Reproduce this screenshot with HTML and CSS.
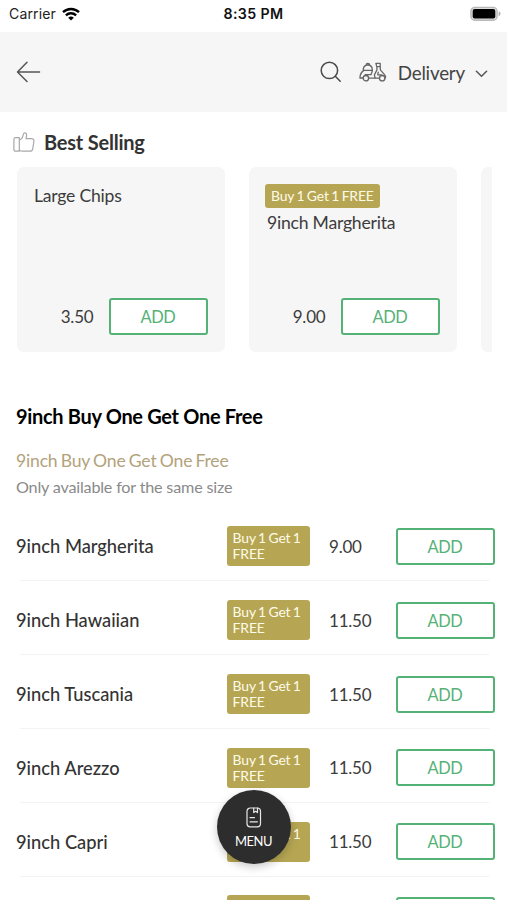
FILE: index.html
```html
<!DOCTYPE html>
<html lang="en">
<head>
<meta charset="utf-8">
<meta name="viewport" content="width=device-width, initial-scale=1">
<title>Menu</title>
<link rel="stylesheet" href="styles.css">
</head>
<body>
<div class="screen">
  <div class="status">
    <div class="carrier"><span>Carrier</span>
      <svg width="18" height="14" viewBox="0 0 18 14" fill="none" stroke="#000" stroke-width="2.4"><path d="M1 5.2a11.6 11.6 0 0 1 16 0M3.900 8.300a7.400 7.400 0 0 1 10.200 0"/><path d="M9 13.600 6.200 10.800a4 4 0 0 1 5.600 0z" fill="#000" stroke="none"/></svg>
    </div>
    <div class="clock">8:35 PM</div>
    <svg class="battery" width="31" height="16" viewBox="0 0 31 16"><rect x=".9" y="1.400" width="26.200" height="12.800" rx="4" fill="#ddd" stroke="#b8b8b8" stroke-width="1.400"/><rect x="2.700" y="3.100" width="22.600" height="9.400" rx="2" fill="#000"/><path d="M28.600 5.300q2 .8 2 2.500t-2 2.500z" fill="#b0b0b0"/></svg>
  </div>
  <header class="bar">
    <svg class="back" width="26" height="22" viewBox="0 0 26 22" fill="none" stroke="#555" stroke-width="1.500" stroke-linecap="round" stroke-linejoin="round"><path d="M23.500 11H1.500M11 1.200 1.500 11l9.500 9.500"/></svg>
    <svg class="search" width="22" height="22" viewBox="0 0 22 22" fill="none" stroke="#4a4a4a" stroke-width="1.500" stroke-linecap="round"><circle cx="9.400" cy="9.400" r="8.200"/><path d="m15.300 15.300 4.900 4.900"/></svg>
    <svg class="scooter" width="28" height="20" viewBox="0 0 28 20" fill="none" stroke="#666" stroke-width="1.300" stroke-linecap="round" stroke-linejoin="round"><path d="M4.200 8.400c0-3.600 1.500-5.400 4.600-5.400s4.600 1.800 4.600 5.400zM7 3.200C7.200.9 10.500.9 10.800 3.200M4.600 8.600C2 10.400.9 12.600.9 16h3M13.400 8.600 12 12.700H6.200M9.800 16.200h10"/><circle cx="6.900" cy="16.200" r="2.700"/><circle cx="23.200" cy="16.200" r="2.700"/><path d="M16.900 1.300h4.300v3.400h-3.400zM17.800 4.700l.2 3-2.600 5.200.7 3.300M21.200 4.700l.2 3.200 4.300 5c1 1.100 1.200 2.100.3 3.200M19.200 10.200l-.4 2.600 4 .1"/></svg>
    <span class="mode">Delivery</span>
    <svg class="chev" width="13" height="8" viewBox="0 0 13 8" fill="none" stroke="#555" stroke-width="1.500" stroke-linecap="round" stroke-linejoin="round"><path d="m1.400 1.200 5.100 5 5.100-5"/></svg>
  </header>
  <section class="best">
    <h2><svg width="22" height="21" viewBox="0 0 22 21" fill="none" stroke="#a8a8a8" stroke-width="1.200" stroke-linejoin="round" stroke-linecap="round"><path d="M6.300 19.200H2.700Q.9 19.200.9 17.400V7.500q0-1.800 1.800-1.800h3.600zM6.300 8.200c2.300-1.200 3.700-3.100 3.900-5.400.1-1.400.7-2 1.500-2 1.500 0 2.200 1.500 1.900 3.200l-.6 2.700h5.500c1.800 0 2.700 1.100 2.400 2.800l-1.200 7.300c-.3 1.800-1.100 2.400-2.700 2.400H9.800c-1.500 0-2.300-.3-3.500-1"/></svg><span>Best Selling</span></h2>
    <div class="cards">
      <article class="card">
        <div class="name">Large Chips</div>
        <div class="buy"><span class="price">3.50</span><button class="add">ADD</button></div>
      </article>
      <article class="card">
        <div class="tag">Buy 1 Get 1 FREE</div>
        <div class="name indent">9inch Margherita</div>
        <div class="buy"><span class="price">9.00</span><button class="add">ADD</button></div>
      </article>
      <article class="card"></article>
    </div>
  </section>
  <section class="list">
    <h1>9inch Buy One Get One Free</h1>
    <h3>9inch Buy One Get One Free</h3>
    <p class="note">Only available for the same size</p>
    <div class="row"><span class="item">9inch Margherita</span><span class="tag">Buy 1 Get 1 FREE</span><span class="price">9.00</span><button class="add">ADD</button></div>
    <div class="row"><span class="item">9inch Hawaiian</span><span class="tag">Buy 1 Get 1 FREE</span><span class="price">11.50</span><button class="add">ADD</button></div>
    <div class="row"><span class="item">9inch Tuscania</span><span class="tag">Buy 1 Get 1 FREE</span><span class="price">11.50</span><button class="add">ADD</button></div>
    <div class="row"><span class="item">9inch Arezzo</span><span class="tag">Buy 1 Get 1 FREE</span><span class="price">11.50</span><button class="add">ADD</button></div>
    <div class="row"><span class="item">9inch Capri</span><span class="tag">Buy 1 Get 1 FREE</span><span class="price">11.50</span><button class="add">ADD</button></div>
    <div class="row"><span class="item"></span><span class="tag"></span><span class="price"></span><button class="add"></button></div>
  </section>
  <button class="fab">
    <svg width="16" height="21" viewBox="0 0 16 21" fill="none" stroke="#e8e8e8" stroke-width="1.200" stroke-linecap="round" stroke-linejoin="round"><rect x="1" y="1" width="13.500" height="18.800" rx="3.300"/><path d="M7.700 1v4.600l1.900-1.300 1.900 1.300V1M4 10.700h4.500M4 14.800h7.400"/></svg>
    <span>MENU</span>
  </button>
</div>
</body>
</html>
```
FILE: styles.css
```css
* { box-sizing: border-box; }
body { margin: 0; background: #fff; }
.screen {
  position: relative;
  width: 507px;
  height: 900px;
  overflow: hidden;
  font-family: Lato, "Liberation Sans", sans-serif;
  color: #3c3c3c;
}
h1, h2, h3, p { margin: 0; }
button { font-family: inherit; padding: 0; margin: 0; }
svg { display: block; flex: none; }

.status {
  display: grid;
  grid-template-columns: 1fr auto 1fr;
  align-items: center;
  height: 32px;
  padding: 0 6px 5px;
  font-family: Inter, "Liberation Sans", sans-serif;
  font-size: 14px;
  color: #222;
}
.carrier { display: flex; align-items: center; gap: 6px; margin-left: 3px; letter-spacing: .15px; }
.clock { font-size: 14.2px; font-weight: 600; letter-spacing: .4px; color: #111; }
.battery { justify-self: end; }

.bar {
  display: flex;
  align-items: center;
  height: 80px;
  padding: 0 19px 0 16px;
  background: #f6f6f6;
}
.search { margin-left: auto; }
.scooter { margin-left: 17px; }
.mode { margin: 1px 10px 0 11px; font-size: 18.8px; letter-spacing: -.2px; line-height: 24px; color: #444; }
.chev { margin-top: 3px; }

.best { padding: 17px 15px 0 17px; }
.best h2 {
  display: flex;
  align-items: center;
  gap: 9px;
  height: 26px;
  margin-left: -4px;
  font-size: 20px;
  letter-spacing: -.22px;
  color: #333;
}
.cards { display: flex; gap: 24px; height: 185px; margin-top: 12px; overflow: hidden; }
.card {
  flex: 0 0 208px;
  display: flex;
  flex-direction: column;
  align-items: flex-start;
  padding: 17px 17px 17px;
  border-radius: 7px;
  background: #f6f6f6;
}
.name { font-size: 17.6px; letter-spacing: -.23px; line-height: 24px; }
.indent { margin: 3px 0 0 1px; }
.buy { display: flex; align-items: center; gap: 15.5px; margin-top: auto; align-self: flex-end; }
.price { font-size: 17px; letter-spacing: -.2px; }
.add {
  width: 99px;
  height: 37px;
  padding-right: 1px;
  border: 2px solid #55b277;
  border-radius: 3px;
  background: #fff;
  color: #55b277;
  font-size: 16.4px;
  letter-spacing: -.4px;
}
.tag {
  padding: 0 6px;
  border-radius: 3px;
  background: #b6a653;
  color: #fffbe9;
  font-size: 13.9px;
  letter-spacing: -.12px;
  word-spacing: -1px;
  line-height: 24px;
  white-space: nowrap;
}
.card .tag { margin-left: -1px; }

.list { padding: 50px 12px 0 16px; }
.list h1 { font-size: 20px; letter-spacing: -.32px; line-height: 28px; color: #000; }
.list h3 { margin-top: 19px; font-size: 17.6px; letter-spacing: -.2px; word-spacing: -1px; font-weight: 400; line-height: 24px; color: #b3a27c; }
.note { margin-top: 3px; font-size: 16.2px; letter-spacing: -.2px; line-height: 22px; color: #8a8a8a; }
.row {
  display: grid;
  grid-template-columns: 210.6px 83.4px 86px 99px;
  align-items: center;
  height: 73.8px;
  padding-top: 4px;
  background: linear-gradient(#f3f3f3, #f3f3f3) 4px 100% / 469px 1px no-repeat;
}
.note + .row { margin-top: 9.6px; }
.item { font-size: 18.3px; font-weight: 500; color: #333; }
.row .tag { height: 40px; padding: 4px 6px; line-height: 16px; white-space: normal; }
.row .price { padding-left: 19px; }

.fab {
  position: absolute;
  left: 217px;
  top: 790px;
  width: 74px;
  height: 74px;
  display: flex;
  flex-direction: column;
  align-items: center;
  gap: 5px;
  padding: 17px 1px 0 0;
  border: 0;
  border-radius: 50%;
  background: #2d2d2d;
  box-shadow: 0 3px 8px rgba(0, 0, 0, .22);
  color: #fff;
  font-size: 13px;
  letter-spacing: -.5px;
}
```
